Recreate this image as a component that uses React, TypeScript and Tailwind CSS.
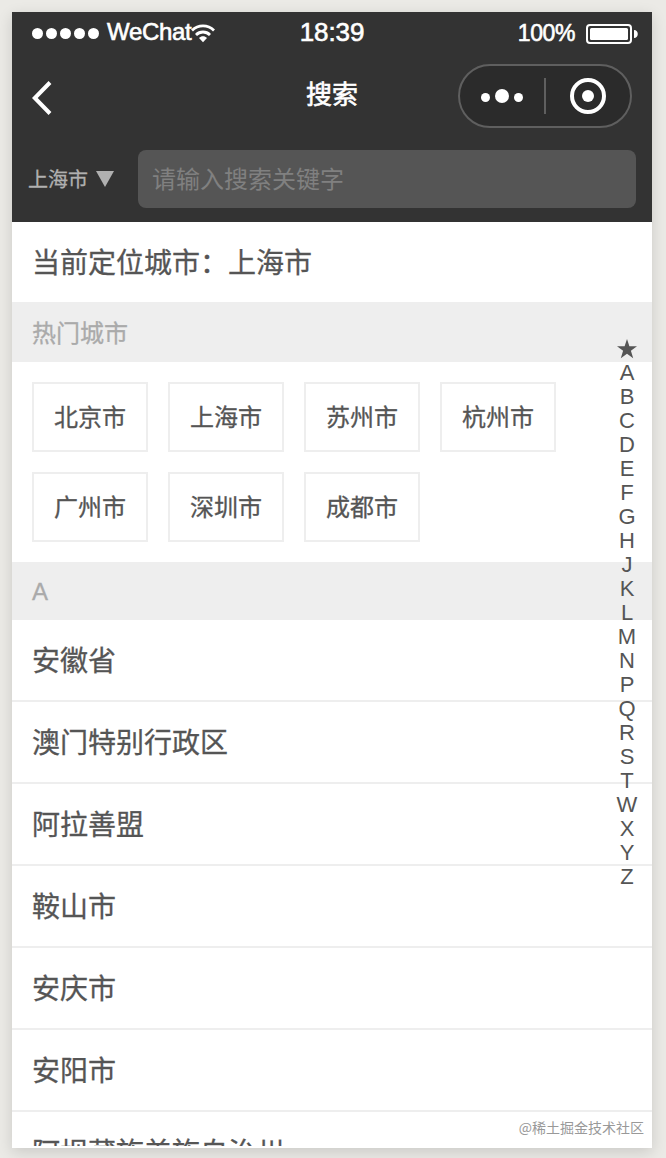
import { useState } from 'react';

const HOT_CITIES = ['北京市', '上海市', '苏州市', '杭州市', '广州市', '深圳市', '成都市'];

const CITY_GROUPS = [
  {
    letter: 'A',
    cities: [
      '安徽省',
      '澳门特别行政区',
      '阿拉善盟',
      '鞍山市',
      '安庆市',
      '安阳市',
      '阿坝藏族羌族自治州',
    ],
  },
];

const LETTERS = 'ABCDEFGHJKLMNPQRSTWXYZ'.split('');

function StatusBar() {
  return (
    <div className="grid h-10 grid-cols-3 items-center pr-[14px] pl-5 font-['Liberation_Sans',Arial,sans-serif] text-white [-webkit-text-stroke:0.6px_white]">
      <div className="flex items-center">
        <div className="mt-[3px] flex gap-[3px]">
          {[0, 1, 2, 3, 4].map((dot) => (
            <span key={dot} className="size-[11px] rounded-full bg-white" />
          ))}
        </div>
        <span className="ml-2 text-2xl leading-10 tracking-[-0.3px]">WeChat</span>
        <svg className="mt-[2px] h-[19px] w-6 shrink-0" viewBox="0 0 24 19" fill="none" stroke="white">
          <path d="M1 6.4C7.2.4 16.8.4 23 6.4" strokeWidth="2.8" />
          <path d="M5 10.9c3.9-3.9 10.1-3.9 14 0" strokeWidth="2.8" />
          <path d="M8 14c2.3-2.3 5.7-2.3 8 0l-4 4.3z" fill="white" stroke="none" />
        </svg>
      </div>
      <span className="-ml-[6px] text-center text-[26px] leading-[38px] tracking-[-0.1px]">18:39</span>
      <div className="flex items-center justify-end">
        <span className="mt-[2px] text-[23px] leading-[38px] tracking-[-0.4px]">100%</span>
        <svg className="mt-1 ml-[11px] h-5 w-[52px]" viewBox="0 0 52 20" fill="none">
          <rect x="1" y="1" width="44" height="18" rx="3" stroke="white" strokeWidth="2" />
          <rect x="4" y="4" width="38" height="12" rx="1.5" fill="white" />
          <path d="M48 6c5 0 5 8 0 8z" fill="white" />
        </svg>
      </div>
    </div>
  );
}

function NavBar() {
  return (
    <div className="grid h-[88px] grid-cols-3 items-center pr-5 pl-5">
      <svg className="mt-1 h-9 w-5" viewBox="0 0 20 36" fill="none" stroke="white" strokeWidth="4">
        <path d="M18 2.5 2.8 18 18 33.5" />
      </svg>
      <h1 className="-mt-[6px] text-center text-[26px] leading-10 font-normal text-white [-webkit-text-stroke:0.6px_white]">
        搜索
      </h1>
      <div className="flex h-16 w-[174px] items-center justify-self-end rounded-full border-2 border-[#5f5f5f] bg-[#2b2b2b]">
        <div className="flex w-[84px] items-center justify-center gap-[5px]">
          <span className="mt-[2px] size-[9px] rounded-full bg-white" />
          <span className="size-[14px] rounded-full bg-white" />
          <span className="mt-[2px] size-[9px] rounded-full bg-white" />
        </div>
        <span className="h-9 w-[2px] bg-[#5f5f5f]" />
        <div className="flex flex-1 justify-center">
          <span className="flex size-9 items-center justify-center rounded-full border-4 border-white">
            <span className="size-3 rounded-full bg-white" />
          </span>
        </div>
      </div>
    </div>
  );
}

function SearchBar() {
  const [keyword, setKeyword] = useState('');

  return (
    <div className="flex items-center pt-[10px] pr-4 pl-4">
      <button className="flex w-[110px] items-center text-xl leading-[58px] text-[#b0b0b0] [-webkit-text-stroke:0.3px_#b0b0b0]">
        上海市
        <svg className="ml-2 h-4 w-[18px]" viewBox="0 0 18 16" fill="#b0b0b0">
          <path d="M0 0h18L9 16z" />
        </svg>
      </button>
      <input
        className="h-[58px] min-w-0 flex-1 rounded-lg bg-[#555] px-[14px] pb-1 text-2xl text-[#ddd] outline-none placeholder:text-[#808080]"
        value={keyword}
        placeholder="请输入搜索关键字"
        onChange={(event) => setKeyword(event.target.value)}
      />
    </div>
  );
}

function LetterIndex() {
  return (
    <nav className="absolute top-[325px] right-0 w-[50px] text-center font-['Liberation_Sans',Arial,sans-serif] text-[22px] leading-6">
      <svg className="mx-auto h-6 w-5" viewBox="0 0 20 24" fill="#555">
        <path d="M10 2l2.4 7.2H20l-6.1 4.5 2.3 7.6-6.2-4.6-6.2 4.6 2.3-7.6L0 9.2h7.6z" />
      </svg>
      {LETTERS.map((letter) => (
        <div key={letter}>{letter}</div>
      ))}
    </nav>
  );
}

function App() {
  return (
    <div className="h-[1158px] overflow-hidden bg-[#ebeae6] p-3 pb-[10px] font-['Noto_Sans_CJK_SC',sans-serif] text-[#555]">
      <div className="relative h-[1136px] w-[640px] bg-white pb-[2px] shadow-[0_4px_14px_rgba(0,0,0,0.14)]">
        <div className="h-full overflow-hidden">
          <header className="h-[210px] bg-[#333]">
            <StatusBar />
            <NavBar />
            <SearchBar />
          </header>

          <div className="h-20 px-5 text-[28px] leading-[78px] [-webkit-text-stroke:0.3px_#555]">
            当前定位城市：上海市
          </div>

          <h2 className="h-[60px] bg-[#eee] px-5 text-2xl leading-[60px] text-[#aaa] [-webkit-text-stroke:0.3px_#aaa]">
            热门城市
          </h2>
          <div className="flex h-[200px] flex-wrap content-start gap-5 p-5">
            {HOT_CITIES.map((city) => (
              <button
                key={city}
                className="h-[70px] w-[116px] border-2 border-[#eee] pb-[2px] text-2xl [-webkit-text-stroke:0.3px_#555]">
                {city}
              </button>
            ))}
          </div>

          {CITY_GROUPS.map((group) => (
            <section key={group.letter}>
              <h2 className="h-[58px] bg-[#eee] px-5 font-['Liberation_Sans',Arial,sans-serif] text-2xl leading-[60px] text-[#aaa] [-webkit-text-stroke:0.3px_#aaa]">
                {group.letter}
              </h2>
              {group.cities.map((city) => (
                <div
                  key={city}
                  className="h-[82px] border-b-2 border-[#eee] px-5 text-[28px] leading-[78px] [-webkit-text-stroke:0.3px_#555]">
                  {city}
                </div>
              ))}
            </section>
          ))}
        </div>

        <LetterIndex />

        <span className="absolute right-2 bottom-[10px] text-sm leading-[22px] text-[#999]">
          @稀土掘金技术社区
        </span>
      </div>
    </div>
  );
}

export default App;
